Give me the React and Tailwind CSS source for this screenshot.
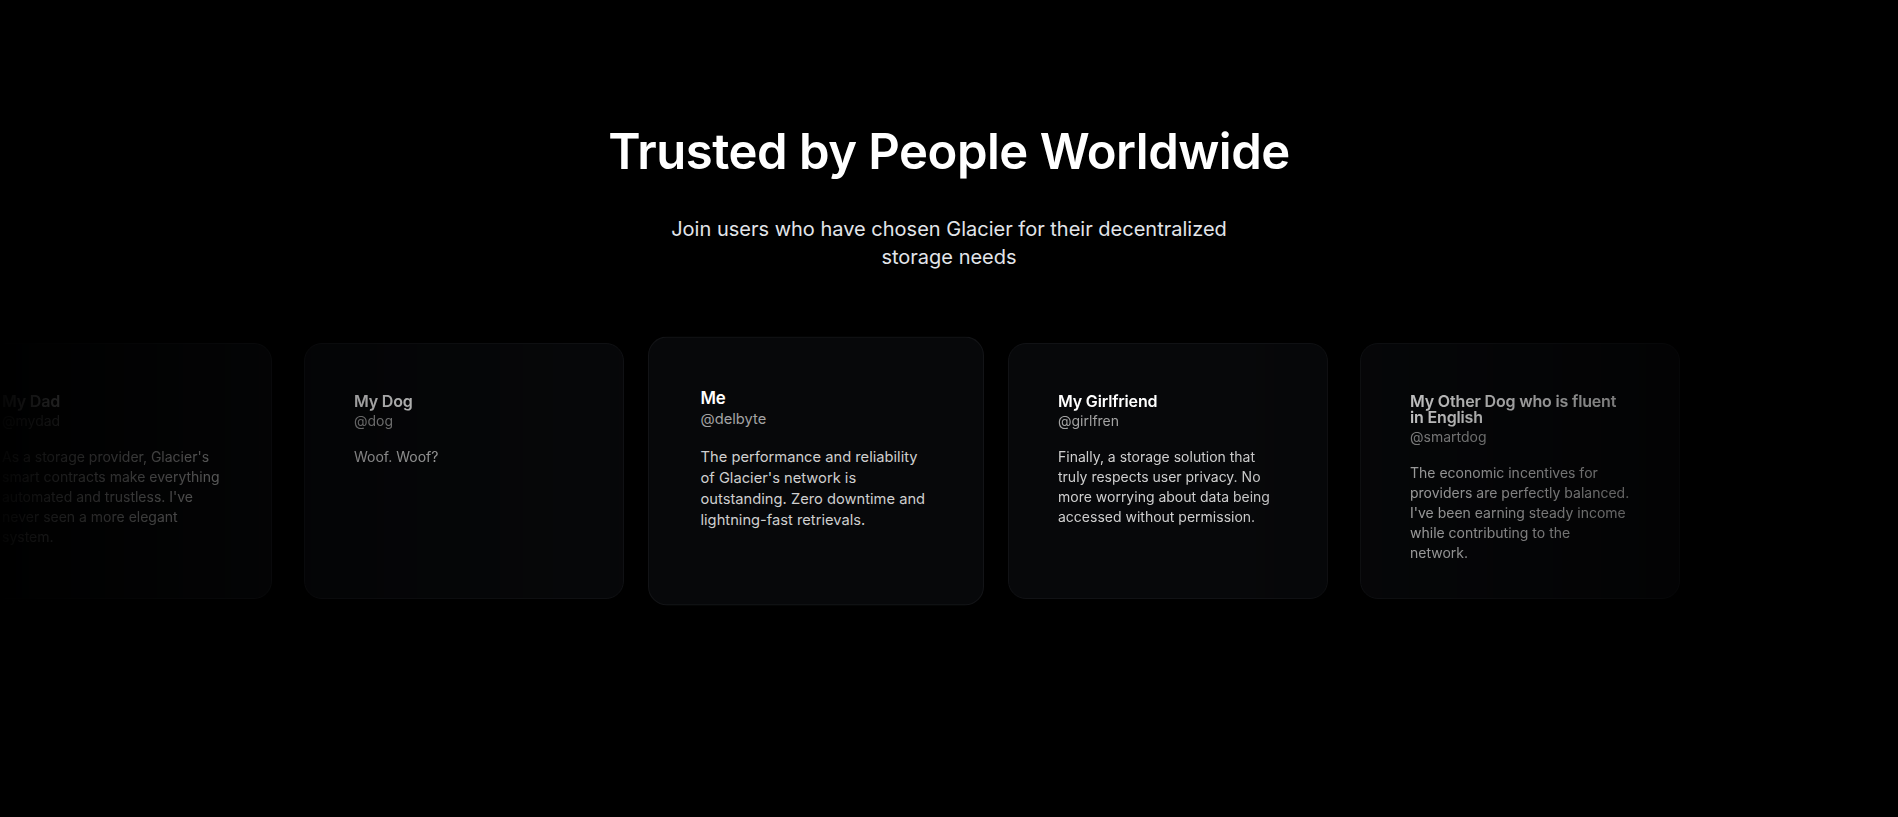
import React from "react";

const testimonials = [
  {
    name: "My Dad",
    handle: "@mydad",
    text: "As a storage provider, Glacier's smart contracts make everything automated and trustless. I've never seen a more elegant system.",
  },
  { name: "My Dog", handle: "@dog", text: "Woof. Woof?" },
  {
    name: "Me",
    handle: "@delbyte",
    text: "The performance and reliability of Glacier's network is outstanding. Zero downtime and lightning-fast retrievals.",
    active: true,
  },
  {
    name: "My Girlfriend",
    handle: "@girlfren",
    text: "Finally, a storage solution that truly respects user privacy. No more worrying about data being accessed without permission.",
  },
  {
    name: "My Other Dog who is fluent in English",
    handle: "@smartdog",
    text: "The economic incentives for providers are perfectly balanced. I've been earning steady income while contributing to the network.",
  },
];

function Card({ t }) {
  return (
    <div
      className={
        "w-[320px] h-[256px] shrink-0 rounded-[18px] border p-[49px] " +
        (t.active
          ? "scale-105 bg-[#07080a] border-[#131417]"
          : "bg-[#07080a] border-[#111215]")
      }
    >
      <div className="text-[16px] leading-[16px] font-semibold text-white tracking-[-0.01em]">{t.name}</div>
      <div className="mt-0.5 text-[14px] leading-[20px] text-[#a3a3a3]">{t.handle}</div>
      <p className="mt-[16px] text-[14px] leading-[20px] text-[#cfcfcf]">{t.text}</p>
    </div>
  );
}

export default function App() {
  return (
    <div
      className="min-h-[817px] w-full bg-black overflow-hidden"
      style={{ fontFamily: "Inter, 'Liberation Sans', sans-serif" }}
    >
      <div className="pt-[128px] flex flex-col items-center text-center">
        <h1 className="text-[49px] leading-[48px] font-semibold text-white tracking-[-0.01em]">
          Trusted by People Worldwide
        </h1>
        <p className="mt-[39px] max-w-[600px] text-[20px] leading-[28px] text-[#e2e5ea]">
          Join users who have chosen Glacier for their decentralized storage needs
        </p>
      </div>
      <div className="mt-[56px] w-full overflow-hidden py-4 [mask-image:linear-gradient(to_right,rgba(0,0,0,0.02)_0px,rgba(0,0,0,0.5)_260px,#000_680px,#000_calc(100%_-_680px),rgba(0,0,0,0.45)_calc(100%_-_260px),transparent_100%)] [-webkit-mask-image:linear-gradient(to_right,rgba(0,0,0,0.02)_0px,rgba(0,0,0,0.5)_260px,#000_680px,#000_calc(100%_-_680px),rgba(0,0,0,0.45)_calc(100%_-_260px),transparent_100%)]">
        <div className="flex gap-8 -translate-x-12">
          {testimonials.map((t) => (
            <Card key={t.handle} t={t} />
          ))}
        </div>
      </div>
    </div>
  );
}
